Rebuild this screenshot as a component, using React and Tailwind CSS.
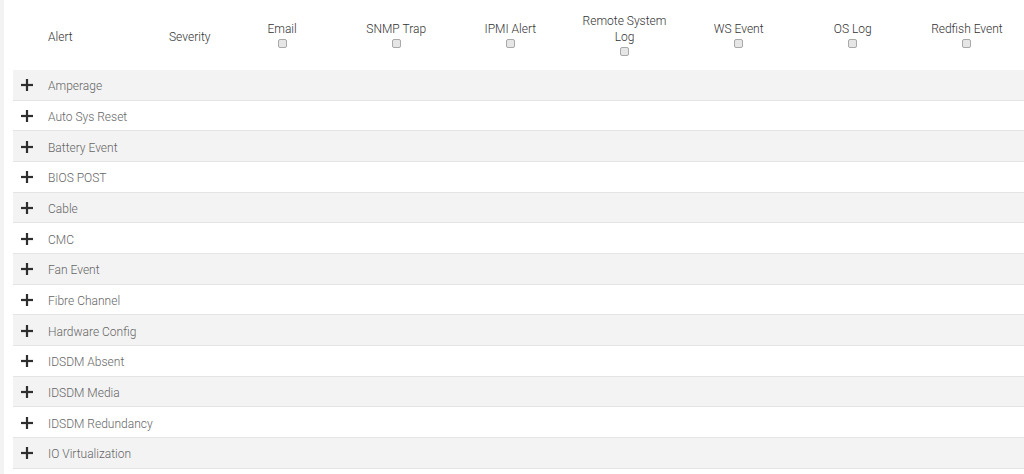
import React from "react";

const cols = ["Email", "SNMP Trap", "IPMI Alert", "Remote System Log", "WS Event", "OS Log", "Redfish Event"];
const rows = ["Amperage", "Auto Sys Reset", "Battery Event", "BIOS POST", "Cable", "CMC", "Fan Event", "Fibre Channel", "Hardware Config", "IDSDM Absent", "IDSDM Media", "IDSDM Redundancy", "IO Virtualization"];

function Box() {
  return <span className="block w-[9px] h-[9px] rounded-[2px] border border-[#a9a9a9] bg-[#e6e6e6] mt-[2px]" />;
}

function Plus() {
  return (
    <svg width="12" height="12" viewBox="0 0 12 12" className="block">
      <rect x="4.9" y="0" width="2.2" height="12" fill="#2e2e2e" />
      <rect x="0" y="4.9" width="12" height="2.2" fill="#2e2e2e" />
    </svg>
  );
}

export default function App() {
  return (
    <div className="flex w-[1024px] h-[474px] overflow-hidden bg-white" style={{ fontFamily: "Roboto, 'Noto Sans', sans-serif" }}>
      <div className="w-[4px] bg-[#f3f3f3] shrink-0" />
      <div className="w-[9px] shrink-0" />
      <div className="flex-1 flex flex-col">
        <div className="flex h-[70px] items-center text-[12px] text-[#333] font-light">
          <div className="w-[27px] shrink-0" />
          <div className="w-[121px] shrink-0 pl-[8px] pt-[3px]">Alert</div>
          <div className="w-[64px] shrink-0 pl-[8px] pt-[3px]">Severity</div>
          {cols.map((c) => (
            <div key={c} className="flex-1 flex flex-col items-center text-center leading-[16px] mb-[2px]">
              <span className={c === "Remote System Log" ? "w-[90px]" : ""}>{c}</span>
              <Box />
            </div>
          ))}
        </div>
        {rows.map((r, i) => (
          <div key={r} className={`flex items-center h-[30.67px] shrink-0 border-b border-[#e4e4e4] ${i % 2 === 0 ? "bg-[#f3f3f3]" : "bg-white"}`}>
            <div className="w-[27px] shrink-0 flex justify-center pl-[1px] pt-[1px]"><Plus /></div>
            <div className="pl-[8px] pt-[3px] text-[12px] text-[#666] font-light">{r}</div>
          </div>
        ))}
      </div>
    </div>
  );
}
